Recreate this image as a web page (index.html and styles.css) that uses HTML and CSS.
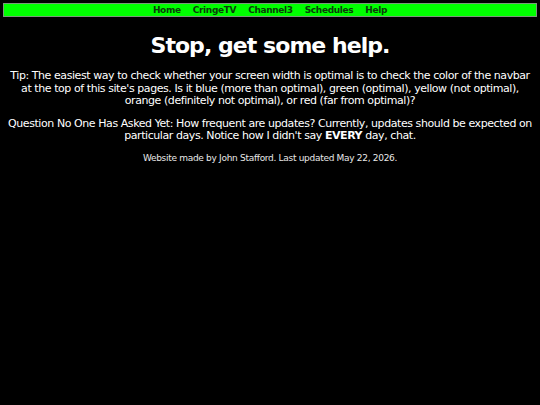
FILE: index.html
```html
<!DOCTYPE html>
<html>
<head>
<meta charset="utf-8">
<link rel="stylesheet" href="styles.css">
</head>
<body>
<nav class="navbar">
  <a href="#">Home</a>
  <a href="#">CringeTV</a>
  <a href="#">Channel3</a>
  <a href="#">Schedules</a>
  <a href="#">Help</a>
</nav>
<main class="content">
  <h1 class="title">Stop, get some help.</h1>
  <p class="text">Tip: The easiest way to check whether your screen width is optimal is to check the color of the navbar at the top of this site's pages. Is it blue (more than optimal), green (optimal), yellow (not optimal), orange (definitely not optimal), or red (far from optimal)?</p>
  <p class="text">Question No One Has Asked Yet: How frequent are updates? Currently, updates should be expected on particular days. Notice how I didn't say <b class="strong">EVERY</b> day, chat.</p>
  <p class="footer">Website made by John Stafford. Last updated May 22, 2026.</p>
</main>
</body>
</html>
```
FILE: styles.css
```css
html, body {
  margin: 0;
  padding: 0;
  background: #000;
  color: #fff;
  font-family: "DejaVu Sans", Verdana, sans-serif;
}
body {
  padding: 3px;
}
.navbar {
  background: #00ff00;
  border: 1px solid #7a9a7a;
  display: flex;
  justify-content: center;
  gap: 12px;
  height: 12px;
  align-items: center;
}
.navbar a {
  color: #0b3d0b;
  text-decoration: none;
  font-weight: bold;
  font-size: 9px;
  letter-spacing: -0.35px;
}
.content {
  text-align: center;
  padding: 0 3px;
}
.title {
  font-size: 22px;
  font-weight: bold;
  margin: 16px 0 12px;
  letter-spacing: -0.95px;
}
.text {
  font-size: 11px;
  margin: 0 0 10px;
  line-height: 12.5px;
  letter-spacing: -0.43px;
}
.strong {
  font-weight: bold;
}
.footer {
  font-size: 9px;
  margin: 0;
  color: #e8e8e8;
  letter-spacing: -0.3px;
}
```
